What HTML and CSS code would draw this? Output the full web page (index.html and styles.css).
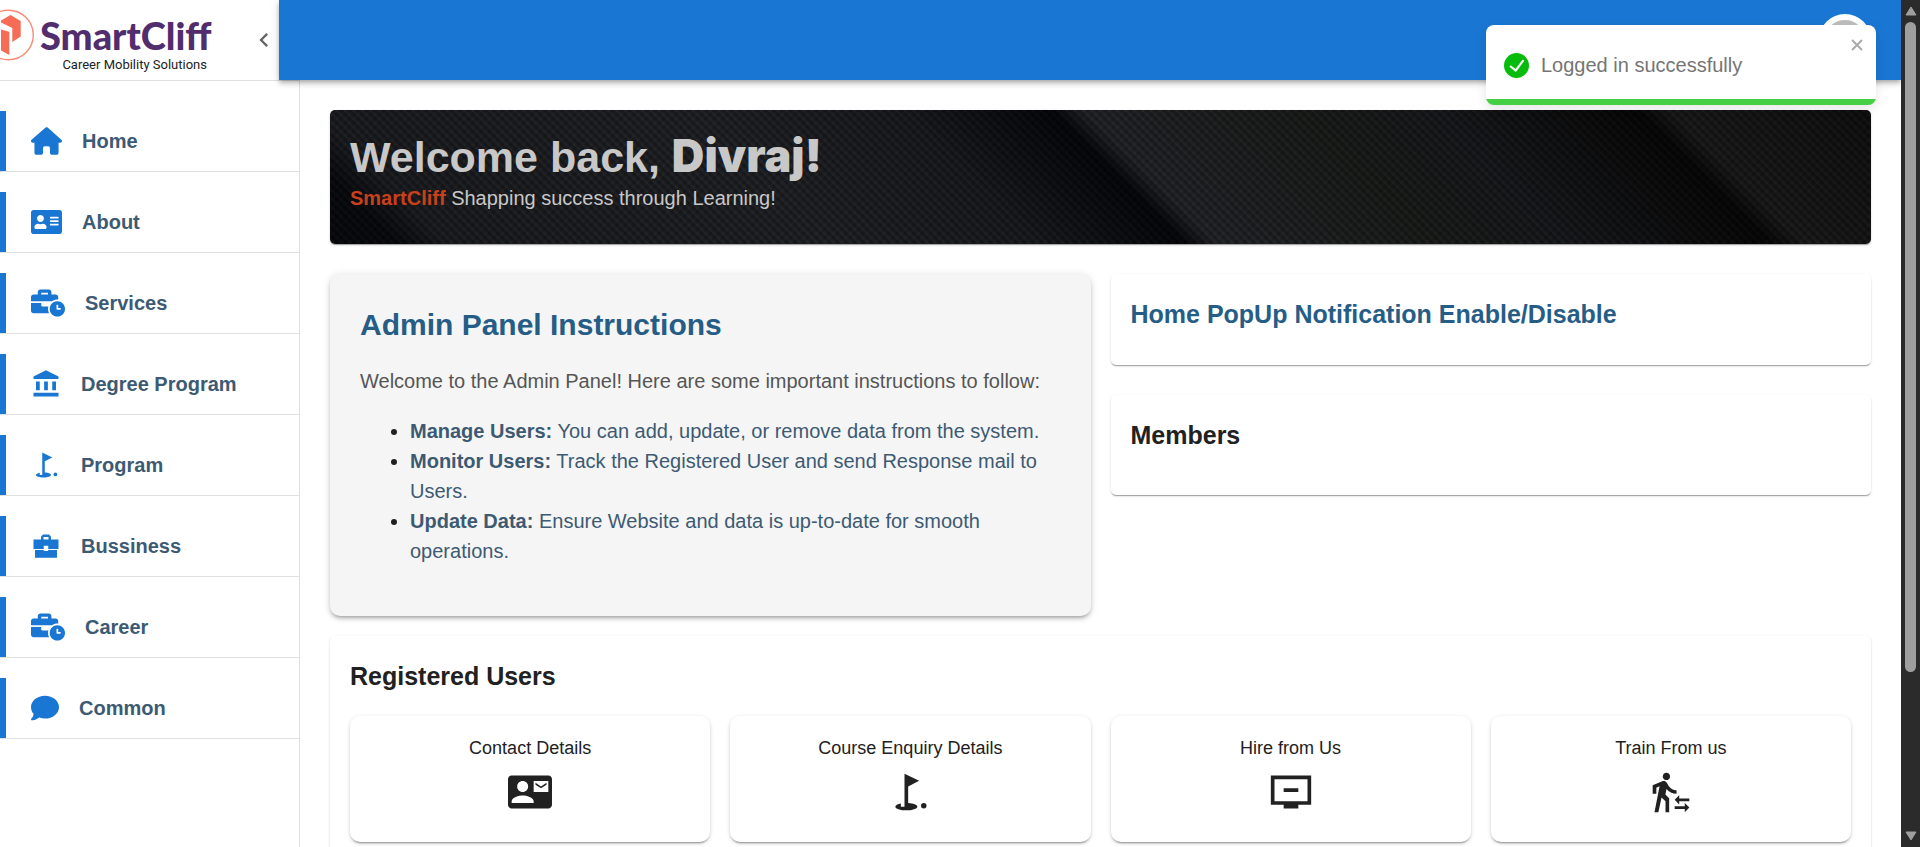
FILE: index.html
```html
<!DOCTYPE html>
<html lang="en">
<head>
<meta charset="utf-8">
<title>SmartCliff Admin</title>
<link rel="stylesheet" href="styles.css">
</head>
<body>
<svg class="sprite" aria-hidden="true">
  <symbol id="business-time" viewBox="0 0 640 512"><path d="M496 224c-79.59 0-144 64.41-144 144s64.41 144 144 144 144-64.41 144-144-64.41-144-144-144zm64 150.29c0 5.34-4.37 9.71-9.71 9.71h-60.57c-5.34 0-9.71-4.37-9.71-9.71v-76.57c0-5.34 4.37-9.71 9.71-9.71h12.57c5.34 0 9.71 4.37 9.71 9.71V352h38.29c5.34 0 9.71 4.37 9.71 9.71v12.58zM496 192c5.4 0 10.72.33 16 .81V144c0-25.6-22.4-48-48-48h-80V48c0-25.6-22.4-48-48-48H176c-25.6 0-48 22.4-48 48v48H48c-25.6 0-48 22.4-48 48v80h395.12c28.6-20.09 63.35-32 100.88-32zM320 96H192V64h128v32zm6.82 224H208c-8.84 0-16-7.16-16-16v-48H0v144c0 25.6 22.4 48 48 48h291.43C327.1 423.96 320 396.82 320 368c0-16.66 2.48-32.72 6.82-48z"/></symbol>
  <symbol id="golf" viewBox="0 0 24 24"><circle cx="19.5" cy="19.5" r="1.5"/><path d="M17 5.92L9 2v18H7v-1.73c-1.79.35-3 .99-3 1.73 0 1.1 2.69 2 6 2s6-.9 6-2c0-.99-2.16-1.81-5-1.97V8.98l6-3.06z"/></symbol>
</svg>
<div class="window">
  <div class="app">
    <aside class="sidebar">
      <div class="brand">
        <svg class="brand-mark" viewBox="0 0 34 52" aria-hidden="true">
          <circle cx="8.500" cy="26" r="24.800" fill="none" stroke="#f88c78" stroke-width="1.400"/>
          <path fill="#f66c56" d="M1 11.500 10.500 6 20.700 12v15.500L12.300 33V19L1 13.500zM1 20.500 9.300 22.800V46L1 41.500z"/>
        </svg>
        <div class="brand-text">
          <span class="brand-name">SmartCliff</span>
          <span class="brand-tag">Career Mobility Solutions</span>
        </div>
        <button class="collapse" type="button" aria-label="Collapse menu">
          <svg viewBox="0 0 24 24" aria-hidden="true"><path d="M15.410 7.410 14 6l-6 6 6 6 1.410-1.410L10.830 12z"/></svg>
        </button>
      </div>
      <nav class="menu">
        <a class="menu-item" href="#"><svg class="fa" viewBox="0 0 576 512" aria-hidden="true"><path d="M575.8 255.5c0 18-15 32.1-32 32.1h-32l.7 160.2c0 2.700-.2 5.400-.5 8.100V472c0 22.100-17.900 40-40 40H392c-22.100 0-40-17.900-40-40V384c0-17.700-14.300-32-32-32H256c-17.700 0-32 14.300-32 32v88c0 22.100-17.900 40-40 40H104c-22.100 0-40-17.900-40-40V287.600H32c-18 0-32-14-32-32.100c0-9 3-17 10-24L266.400 8c7-7 15-8 22-8s15 2 21 7L564.800 231.500c8 7 12 15 11 24z"/></svg>Home</a>
        <a class="menu-item" href="#"><svg class="fa" viewBox="0 0 576 512" aria-hidden="true"><path d="M528 32H48C21.500 32 0 53.500 0 80v352c0 26.500 21.500 48 48 48h480c26.500 0 48-21.500 48-48V80c0-26.500-21.500-48-48-48zm-352 96c35.300 0 64 28.700 64 64s-28.700 64-64 64-64-28.700-64-64 28.700-64 64-64zm112 236.800c0 10.600-10 19.200-22.400 19.200H86.400C74 384 64 375.400 64 364.800v-19.200c0-31.800 30.100-57.600 67.200-57.600h5c12.300 5.100 25.700 8 39.800 8s27.600-2.900 39.800-8h5c37.100 0 67.200 25.800 67.200 57.600v19.200zM512 312c0 4.400-3.600 8-8 8H360c-4.400 0-8-3.600-8-8v-16c0-4.400 3.600-8 8-8h144c4.400 0 8 3.600 8 8v16zm0-64c0 4.400-3.600 8-8 8H360c-4.400 0-8-3.600-8-8v-16c0-4.400 3.600-8 8-8h144c4.400 0 8 3.600 8 8v16zm0-64c0 4.400-3.600 8-8 8H360c-4.400 0-8-3.600-8-8v-16c0-4.400 3.600-8 8-8h144c4.400 0 8 3.600 8 8v16z"/></svg>About</a>
        <a class="menu-item" href="#"><svg class="fa wide" aria-hidden="true"><use href="#business-time"/></svg>Services</a>
        <a class="menu-item" href="#"><svg class="md" viewBox="0 0 24 24" aria-hidden="true"><path d="M4 10h3v7H4zm6.500 0h3v7h-3zM2 19h20v3H2zm15-9h3v7h-3zm-5-9L2 6v2h20V6z"/></svg>Degree Program</a>
        <a class="menu-item" href="#"><svg class="md" aria-hidden="true"><use href="#golf"/></svg>Program</a>
        <a class="menu-item" href="#"><svg class="md" viewBox="0 0 24 24" aria-hidden="true"><path d="M10.200 16v-.8H3.200v6.100h17.600v-6.100h-7v.8zM22 6.800h-6V4.500l-1.600-1.700H9.600L8 4.500v2.300H2v7.500h8.200v-2.500h3.600v2.500H22zm-8 0h-4V4.700h4z"/></svg>Bussiness</a>
        <a class="menu-item" href="#"><svg class="fa wide" aria-hidden="true"><use href="#business-time"/></svg>Career</a>
        <a class="menu-item" href="#"><svg class="fa narrow" viewBox="0 0 512 512" aria-hidden="true"><path d="M512 240c0 114.900-114.600 208-256 208c-37.100 0-72.300-6.400-104.100-17.900c-11.900 8.700-31.300 20.600-54.300 30.600C73.600 471.100 44.700 480 16 480c-6.500 0-12.300-3.900-14.800-9.900c-2.500-6-1.100-12.800 3.400-17.400l.3-.3c.3-.3.7-.7 1.300-1.400c1.100-1.200 2.800-3.100 4.900-5.700c4.100-5 9.600-12.400 15.200-21.600c10-16.600 19.500-38.400 21.400-62.900C17.700 326.800 0 285.100 0 240C0 125.100 114.600 32 256 32s256 93.100 256 208z"/></svg>Common</a>
      </nav>
    </aside>

    <header class="topbar">
      <button class="avatar" type="button" aria-label="Account"></button>
    </header>

    <main class="content">
      <section class="banner">
        <h1>Welcome back, <span class="user">Divraj!</span></h1>
        <p><strong>SmartCliff</strong> Shapping success through Learning!</p>
      </section>

      <div class="columns">
        <section class="instructions">
          <h2>Admin Panel Instructions</h2>
          <p>Welcome to the Admin Panel! Here are some important instructions to follow:</p>
          <ul>
            <li><strong>Manage Users:</strong> You can add, update, or remove data from the system.</li>
            <li><strong>Monitor Users:</strong> Track the Registered User and send Response mail to Users.</li>
            <li><strong>Update Data:</strong> Ensure Website and data is up-to-date for smooth operations.</li>
          </ul>
        </section>
        <div class="side">
          <section class="card popup"><h3>Home PopUp Notification Enable/Disable</h3></section>
          <section class="card members"><h3>Members</h3></section>
        </div>
      </div>

      <section class="card registered">
        <h3>Registered Users</h3>
        <div class="tiles">
          <a class="tile" href="#">Contact Details
            <svg viewBox="0 0 24 24" aria-hidden="true"><path d="M21 8V7l-3 2-3-2v1l3 2 3-2zm1-5H2C.9 3 0 3.900 0 5v14c0 1.100.9 2 2 2h20c1.100 0 1.990-.9 1.990-2L24 5c0-1.100-.9-2-2-2zM8 6c1.660 0 3 1.340 3 3s-1.340 3-3 3-3-1.340-3-3 1.340-3 3-3zm6 12H2v-1c0-2 4-3.100 6-3.100s6 1.100 6 3.100v1zm8-6h-8V6h8v6z"/></svg></a>
          <a class="tile" href="#">Course Enquiry Details
            <svg aria-hidden="true"><use href="#golf"/></svg></a>
          <a class="tile" href="#">Hire from Us
            <svg viewBox="0 0 24 24" aria-hidden="true"><path d="M23 3H1v16h7v2h8v-2h7V3zm-2 14H3V5h18v12zm-5-7v2H8v-2h8z"/></svg></a>
          <a class="tile" href="#">Train From us
            <svg viewBox="0 0 24 24" aria-hidden="true"><path d="M16.490 15.500v-1.750L14 16.250l2.490 2.500V17H22v-1.500zm3.020 4.250H14v1.500h5.510V23L22 20.500 19.510 18zM9.500 5.500c1.100 0 2-.9 2-2s-.9-2-2-2-2 .9-2 2 .9 2 2 2zM5.750 8.900L3 23h2.100l1.750-8L9 17v6h2v-7.550L8.950 13.400l.6-3C10.850 12 12.800 13 15 13v-2c-1.850 0-3.450-1-4.350-2.450l-.95-1.600C9.350 6.350 8.700 6 8 6c-.25 0-.5.050-.75.150L2 8.300V13h2V9.650l1.750-.75"/></svg></a>
        </div>
      </section>
    </main>

    <div class="toast" role="alert">
      <svg class="toast-icon" viewBox="0 0 24 24" aria-hidden="true"><path d="M12 0a12 12 0 1012 12A12.014 12.014 0 0012 0zm6.927 8.200l-6.845 9.289a1.011 1.011 0 01-1.430.188l-4.888-3.908a1 1 0 111.250-1.562l4.076 3.261 6.227-8.451a1 1 0 111.610 1.183z"/></svg>
      <span class="toast-text">Logged in successfully</span>
      <button class="toast-close" type="button" aria-label="Close"><svg viewBox="0 0 12 12" aria-hidden="true"><path d="M1 1l10 10M11 1L1 11"/></svg></button>
    </div>
  </div>

  <div class="scrollbar" aria-hidden="true">
    <svg viewBox="0 0 12 10"><path d="M6 1 11 9H1z"/></svg>
    <div class="track"><div class="thumb"></div></div>
    <svg viewBox="0 0 12 10"><path d="M6 9 11 1H1z"/></svg>
  </div>
</div>
</body>
</html>
```
FILE: styles.css
```css
* { box-sizing: border-box; }

body {
  margin: 0;
  background: #fff;
  color: #212121;
  font-family: "Liberation Sans", Arial, sans-serif;
  font-size: 20px;
  line-height: 30px;
}

h1, h2, h3, p, ul { margin: 0; }
a { color: inherit; text-decoration: none; }
button { margin: 0; padding: 0; border: 0; background: none; cursor: pointer; }
svg { display: block; flex: none; fill: currentColor; }
.sprite { position: absolute; width: 0; height: 0; }

.window { display: flex; height: 100vh; overflow: hidden; }

.app {
  position: relative;
  flex: 1;
  min-width: 0;
  overflow: hidden;
  display: grid;
  grid-template-columns: 279px 21px minmax(0, 1fr);
  grid-template-rows: 80px minmax(0, 1fr);
}

/* Sidebar */
.sidebar { grid-column: 1 / 3; grid-row: 1 / 3; border-right: 1px solid #e0e0e0; }
.brand { display: flex; align-items: center; height: 81px; border-bottom: 1px solid #e0e0e0; }
.brand-mark { width: 34px; height: 52px; margin-bottom: 10px; }
.brand-text { display: flex; flex-direction: column; width: 173px; margin-left: 6px; padding-top: 10px; }
.brand-name { color: #512d6d; font: 900 38px/40px Lato, sans-serif; white-space: nowrap; }
.brand-tag { color: #222; font: 13px/20px Roboto, sans-serif; text-align: right; padding-right: 6px; white-space: nowrap; }
.collapse { margin-left: 37px; color: #666; }
.collapse svg { width: 28px; height: 28px; }

.menu { display: flex; flex-direction: column; gap: 20px; padding-top: 30px; }
.menu-item {
  display: flex;
  align-items: center;
  gap: 20px;
  height: 61px;
  padding-left: 31px;
  border-bottom: 1px solid #e0e0e0;
  background: linear-gradient(#1976d2, #1976d2) left / 6px 100% no-repeat;
  color: #3d5a73;
  font-weight: 700;
}
.menu-item svg { color: #1976d2; }
.fa { width: 31px; height: 28px; }
.fa.wide { width: 34px; }
.fa.narrow { width: 28px; }
.md { width: 30px; height: 30px; }

/* Top bar */
.topbar {
  grid-column: 2 / 4;
  grid-row: 1;
  z-index: 1;
  display: flex;
  align-items: center;
  justify-content: flex-end;
  padding-right: 30px;
  background: #1976d2;
  box-shadow: 0 2px 4px -1px rgba(0,0,0,.2), 0 4px 5px rgba(0,0,0,.14), 0 1px 10px rgba(0,0,0,.12);
}
.avatar { width: 52px; height: 52px; border: 6px solid #fff; border-radius: 50%; background: #bdbdbd; }

/* Content */
.content { grid-column: 3; grid-row: 2; padding: 30px; overflow: hidden; }

.banner {
  padding: 20px 20px 32px;
  border-radius: 5px;
  color: #c8c8c8;
  background:
    repeating-linear-gradient(45deg, rgba(0,0,0,.22) 0 1px, rgba(255,255,255,.02) 3px, rgba(0,0,0,.22) 6px),
    repeating-linear-gradient(-45deg, rgba(0,0,0,.12) 0 1px, rgba(255,255,255,.01) 3px, rgba(0,0,0,.12) 6px),
    linear-gradient(45deg, #07080c 4%, #1b1c20 7%, #202125 30%, #191a1e 42%, #030408 51%, #232428 53%, #191b19 66%, #17181b 74%, #050505 86%, #191919 88%, #0e0e0e);
  box-shadow: 0 2px 1px -1px rgba(0,0,0,.2), 0 1px 1px rgba(0,0,0,.14), 0 1px 3px rgba(0,0,0,.12);
}
.banner h1 { font-size: 43px; line-height: 54px; }
.banner .user { font-family: Inter, sans-serif; font-size: 45px; font-weight: 900; line-height: 1; }
.banner p { line-height: 28px; }
.banner strong { color: #c8401c; }

.columns { display: grid; grid-template-columns: minmax(0, 1fr) minmax(0, 1fr); gap: 20px; margin: 30px 0 20px; }

.instructions {
  padding: 30px;
  border-radius: 10px;
  background: #f5f5f5;
  box-shadow: 0 3px 3px -2px rgba(0,0,0,.2), 0 3px 4px rgba(0,0,0,.14), 0 1px 8px rgba(0,0,0,.12);
}
.instructions h2 { margin-bottom: 20px; color: #265d87; font-size: 30px; line-height: 42px; }
.instructions p { color: #555; }
.instructions ul { margin: 20px 0; padding-left: 50px; color: #3d5a73; }
.instructions li::marker { color: #212121; }

.side { display: flex; flex-direction: column; gap: 30px; }
.card {
  padding: 20px;
  border-radius: 5px;
  box-shadow: 0 2px 1px -1px rgba(0,0,0,.2), 0 1px 1px rgba(0,0,0,.14), 0 1px 3px rgba(0,0,0,.12);
}
.card h3 { margin-bottom: 19px; font-size: 25px; line-height: 41px; }
.popup h3 { margin-bottom: 10px; color: #265d87; }

.tiles { display: grid; grid-template-columns: repeat(4, minmax(0, 1fr)); gap: 20px; }
.tile {
  display: flex;
  flex-direction: column;
  align-items: center;
  gap: 10px;
  padding: 20px 20px 28px;
  border-radius: 10px;
  box-shadow: 0 3px 1px -2px rgba(0,0,0,.2), 0 2px 2px rgba(0,0,0,.14), 0 1px 5px rgba(0,0,0,.12);
  font-size: 18px;
  line-height: 24px;
}
.tile svg { width: 44px; height: 44px; }

/* Notification */
.toast {
  position: absolute;
  top: 25px;
  right: 25px;
  z-index: 2;
  display: flex;
  align-items: center;
  gap: 12px;
  width: 390px;
  height: 80px;
  padding-left: 18px;
  border-radius: 8px;
  background: linear-gradient(#44cf44, #44cf44) bottom / 100% 6px no-repeat #fff;
  box-shadow: 0 4px 12px rgba(0,0,0,.1);
  color: #757575;
}
.toast-icon { width: 25px; height: 25px; color: #07bc0c; }
.toast-text { flex: 1; }
.toast-close { align-self: flex-start; padding: 14px 13px 0 0; }
.toast-close svg { width: 12px; height: 12px; stroke: #aaa; stroke-width: 2; }

/* Page scrollbar */
.scrollbar {
  display: flex;
  flex-direction: column;
  align-items: center;
  gap: 6px;
  width: 19px;
  padding: 6px 0;
  background: #2b2b2b;
  color: #9f9f9f;
}
.scrollbar svg { width: 12px; height: 10px; stroke: currentColor; stroke-linejoin: round; }
.track { flex: 1; width: 11px; }
.thumb { height: 81%; border-radius: 6px; background: #9f9f9f; }
```
